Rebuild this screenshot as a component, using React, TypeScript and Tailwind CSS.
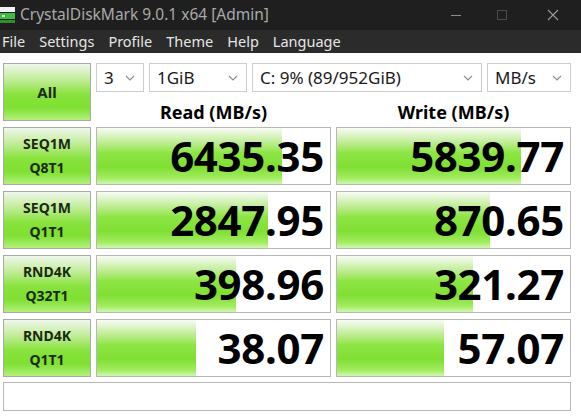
import { Fragment, type FC } from 'react';

const font = "font-['Noto_Sans','Open_Sans',sans-serif]";

const menus = ['File', 'Settings', 'Profile', 'Theme', 'Help', 'Language'];

const results = [
  { a: 'SEQ1M', b: 'Q8T1', read: '6435.35', readPct: 79.5, write: '5839.77', writePct: 79 },
  { a: 'SEQ1M', b: 'Q1T1', read: '2847.95', readPct: 73.5, write: '870.65', writePct: 65.5 },
  { a: 'RND4K', b: 'Q32T1', read: '398.96', readPct: 59.5, write: '321.27', writePct: 58.5 },
  { a: 'RND4K', b: 'Q1T1', read: '38.07', readPct: 42.5, write: '57.07', writePct: 46 },
];

const Chevron: FC = () => (
  <svg width="10" height="6" viewBox="0 0 10 6" className="shrink-0">
    <path d="M1 1l4 4 4-4" fill="none" stroke="#8a8a8a" strokeWidth="1.1" />
  </svg>
);

const Select: FC<{ value: string; className: string }> = ({ value, className }) => (
  <div
    className={`flex h-[29px] items-center justify-between border border-[#cdcdcd] bg-white pl-[7px] pr-[8px] text-[17px] text-[#1a1a1a] ${className}`}
  >
    <span className="leading-none">{value}</span>
    <Chevron />
  </div>
);

const LabelButton: FC<{ lines: string[]; big?: boolean }> = ({ lines, big }) => (
  <div className="flex h-[58px] flex-col items-center justify-center border border-[#a9a9a9] bg-[linear-gradient(to_bottom,#f0f7ec_0%,#c0ed98_28%,#88e23c_55%,#7fe032_78%,#b4f07c_100%)] p-[2px]">
    {lines.map((l) => (
      <span
        key={l}
        className={`font-bold leading-[24px] text-[#1a2a10] ${big ? 'text-[15px]' : 'text-[14px]'}`}
      >
        {l}
      </span>
    ))}
  </div>
);

const ResultCell: FC<{ value: string; pct: number }> = ({ value, pct }) => (
  <div className="relative h-[58px] border border-[#b7b7b7] bg-white">
    <div
      className="absolute inset-y-0 left-0 bg-[linear-gradient(to_bottom,#f8fbf5_0%,#cdf0ab_20%,#8ce543_45%,#7fe032_70%,#a2ec60_90%,#d2f7b0_100%)]"
      style={{ width: `${pct}%` }}
    />
    <div className="relative flex h-full items-center justify-end pr-[6px]">
      <span className="text-[42px] font-bold leading-none tracking-[-0.3px] text-black">
        {value}
      </span>
    </div>
  </div>
);

const App: FC = () => {
  return (
    <div className={`h-[420px] w-[581px] overflow-hidden bg-white ${font}`}>
      {/* title bar */}
      <div className="flex h-[30px] items-center bg-[#1f1f1f]">
        <svg width="16" height="18" viewBox="0 0 16 18" className="mr-[4px]">
          <rect x="0" y="1" width="15" height="5" fill="#f2f2f2" />
          <rect x="0" y="7" width="15" height="6" fill="#3cbf3c" />
          <rect x="0" y="14" width="15" height="3" fill="#2f8f2f" />
          <rect x="2" y="9" width="3" height="2" fill="#e8ffe8" />
        </svg>
        <span className="text-[15.5px] text-[#a9a9a9]">CrystalDiskMark 9.0.1 x64 [Admin]</span>
        <div className="ml-auto flex h-full items-center">
          <div className="flex h-full w-[46px] items-center justify-center">
            <div className="h-px w-[10px] bg-[#8c8c8c]" />
          </div>
          <div className="flex h-full w-[46px] items-center justify-center">
            <div className="h-[10px] w-[10px] border border-[#4a4a4a]" />
          </div>
          <div className="flex h-full w-[56px] items-center justify-center">
            <svg width="12" height="12" viewBox="0 0 12 12">
              <path d="M1 1l10 10M11 1L1 11" stroke="#9a9a9a" strokeWidth="1.1" />
            </svg>
          </div>
        </div>
      </div>

      {/* menu bar */}
      <div className="flex h-[23px] items-center gap-[14px] bg-[#2b2b2b] pl-[2px]">
        {menus.map((m) => (
          <span key={m} className="text-[14.5px] leading-none text-[#e6e6e6]">
            {m}
          </span>
        ))}
      </div>

      <div className="px-[3px] pt-[10px]">
        <div className="grid grid-cols-[88px_235px_235px] gap-x-[5px] gap-y-[6px]">
          <LabelButton lines={['All']} big />
          <div className="col-span-2 flex flex-col">
            <div className="flex gap-[5px]">
              <Select value="3" className="w-[48px]" />
              <Select value="1GiB" className="w-[98px]" />
              <Select value="C: 9% (89/952GiB)" className="w-[230px]" />
              <Select value="MB/s" className="w-[84px]" />
            </div>
            <div className="grid h-[29px] grid-cols-2 items-end gap-x-[5px]">
              <span className="text-center text-[18px] font-bold leading-[18px] text-black">
                Read (MB/s)
              </span>
              <span className="text-center text-[18px] font-bold leading-[18px] text-black">
                Write (MB/s)
              </span>
            </div>
          </div>

          {results.map((r) => (
            <Fragment key={`${r.a}-${r.b}`}>
              <LabelButton lines={[r.a, r.b]} />
              <ResultCell value={r.read} pct={r.readPct} />
              <ResultCell value={r.write} pct={r.writePct} />
            </Fragment>
          ))}
        </div>

        {/* comment box */}
        <div className="mt-[5px] h-[29px] w-[568px] border border-[#b7b7b7] bg-white" />
      </div>
    </div>
  );
};

export default App;
